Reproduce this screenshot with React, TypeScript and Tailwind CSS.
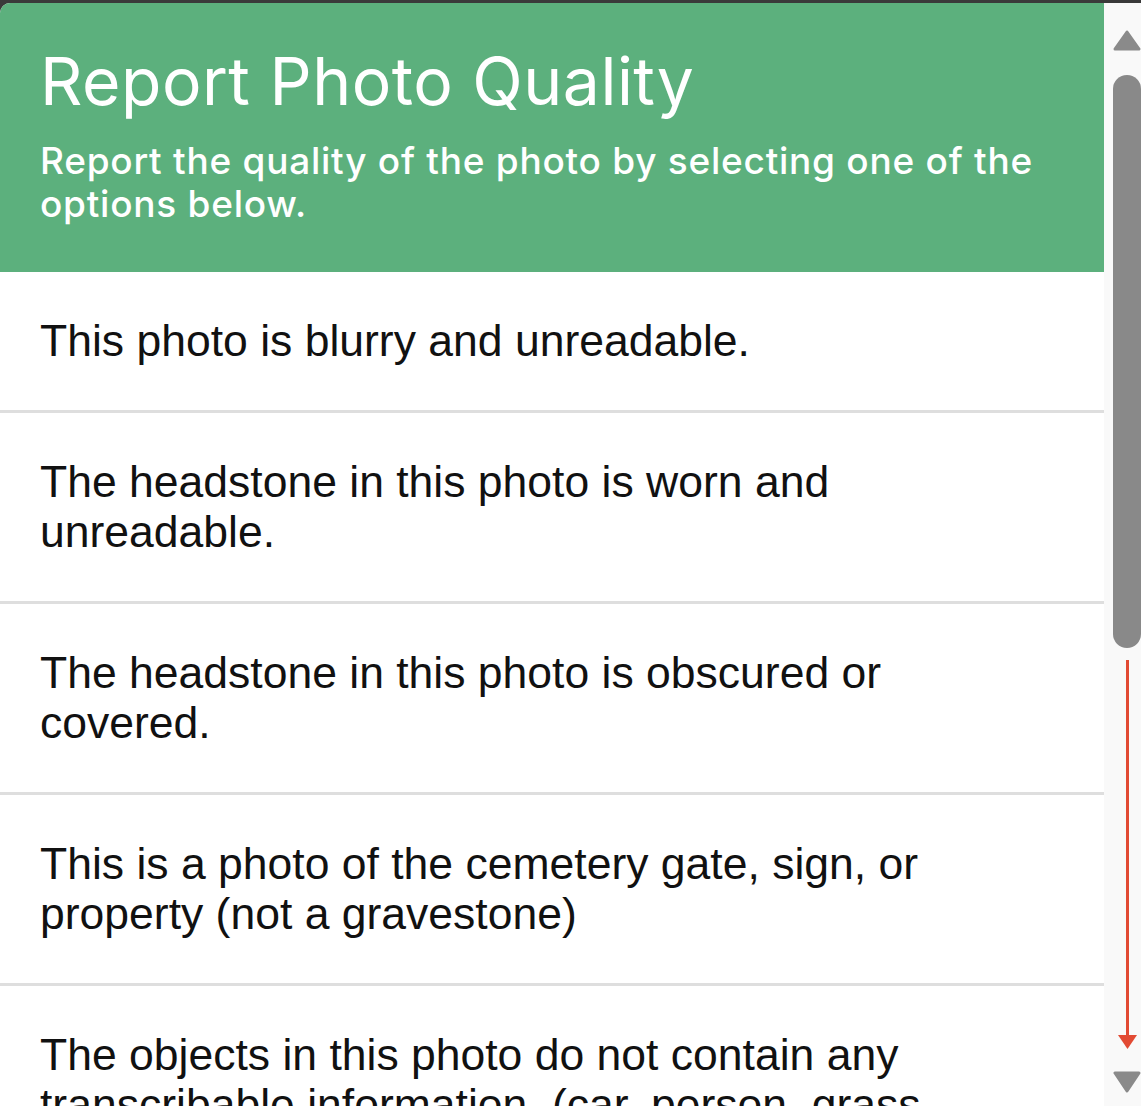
import React from "react";

const options = [
  "This photo is blurry and unreadable.",
  "The headstone in this photo is worn and unreadable.",
  "The headstone in this photo is obscured or covered.",
  "This is a photo of the cemetery gate, sign, or property (not a gravestone)",
  "The objects in this photo do not contain any transcribable information. (car, person, grass, etc.)",
];

export default function App() {
  return (
    <div className="relative h-[1106px] w-[1141px] overflow-hidden bg-[#3a3a3a] pt-[3px]">
      <div className="flex h-full w-full bg-white rounded-tl-[10px] overflow-hidden">
        <div className="w-[1104px] shrink-0 overflow-hidden">
          <div className="h-[269px] bg-[#5cb07d] px-[40px] pt-[40px] text-white" style={{ fontFamily: "Inter, 'Noto Sans', sans-serif" }}>
            <h1 className="text-[66px] leading-[76px] font-normal tracking-[0.5px] whitespace-nowrap">Report Photo Quality</h1>
            <p className="mt-[20px] text-[37px] leading-[43px] font-medium tracking-[0.75px] w-[1010px]">
              Report the quality of the photo by selecting one of the options below.
            </p>
          </div>
          <div style={{ fontFamily: "'Liberation Sans', Arial, sans-serif" }}>
            {options.map((o) => (
              <div key={o} className="border-b-[3px] border-[#dedede] px-[40px] py-[44px] text-[44.5px] leading-[50px] text-[#111111]">
                <div className="w-[900px]">{o}</div>
              </div>
            ))}
          </div>
        </div>
        <div className="relative flex-1 bg-[#f9f9f9]">
          <svg className="absolute left-[9px] top-[26px]" width="28" height="24" viewBox="0 0 28 24">
            <path d="M14 3 L26 20 L2 20 Z" fill="#8a8a8a" stroke="#8a8a8a" strokeWidth="3" strokeLinejoin="round" />
          </svg>
          <div className="absolute left-[9px] top-[72px] h-[573px] w-[28px] rounded-t-[14px] rounded-b-[14px] bg-[#898989]" />
          <svg className="absolute left-[9px] top-[1066px]" width="28" height="26" viewBox="0 0 28 26">
            <path d="M2 4 L26 4 L14 22 Z" fill="#8a8a8a" stroke="#8a8a8a" strokeWidth="3" strokeLinejoin="round" />
          </svg>
        </div>
      </div>
      <svg className="absolute left-[1116px] top-[655px]" width="24" height="400" viewBox="0 0 24 400">
        <path d="M11.5 5 L11.5 385" stroke="#e24a33" strokeWidth="3" />
        <path d="M2 380 L21 380 L11.5 394 Z" fill="#e24a33" />
      </svg>
    </div>
  );
}
